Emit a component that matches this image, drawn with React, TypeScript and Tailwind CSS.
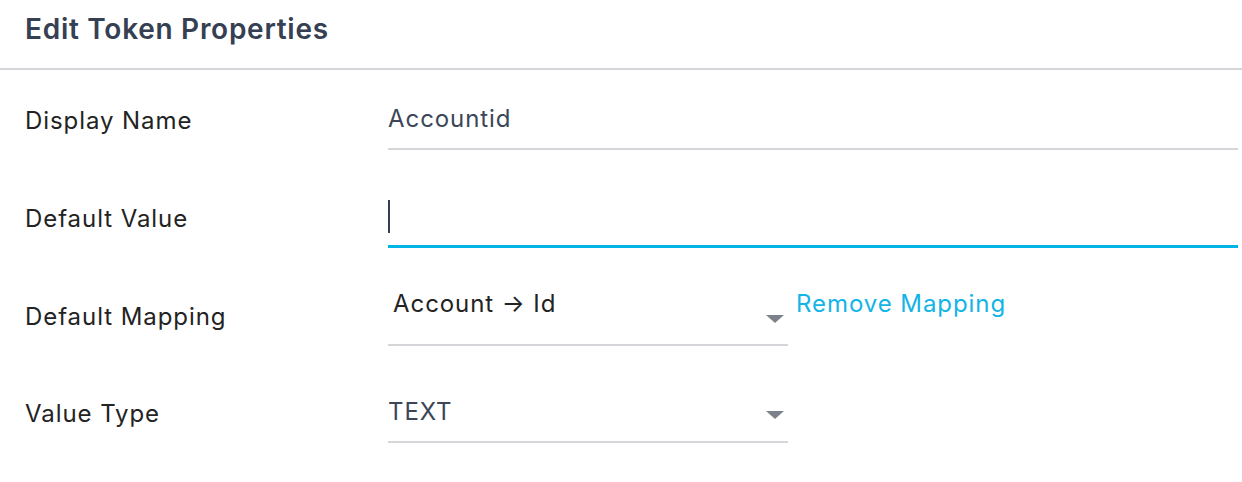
import React from "react";

function Caret() {
  return (
    <svg viewBox="0 0 18 8" aria-hidden className="h-[8px] w-[18px]">
      <path d="M0 0H18L9 8Z" fill="#7d828a" />
    </svg>
  );
}

export default function App() {
  return (
    <div className="h-[482px] w-[1242px] overflow-hidden bg-white font-['Inter',sans-serif] tracking-[0.058em]">
      <div className="flex h-[70px] items-start border-b-2 border-[#d6d6da] px-[25px] pt-[12px]">
        <h1 className="text-[28px] font-semibold leading-[34px] tracking-[0.026em] text-[#354052]">Edit Token Properties</h1>
      </div>

      <div className="pl-[25px] pr-[4px]">
        <div className="mt-[20px] flex items-center">
          <label className="w-[363px] shrink-0 pt-[2px] text-[24px] text-[#232323]">Display Name</label>
          <div className="flex h-[60px] flex-1 items-center border-b-2 border-[#d6d6da] text-[24px] text-[#3b4758]">
            Accountid
          </div>
        </div>

        <div className="mt-[38px] flex items-center">
          <label className="w-[363px] shrink-0 pt-[2px] text-[24px] text-[#232323]">Default Value</label>
          <div className="flex h-[60px] flex-1 items-center border-b-[3px] border-[#00b4e5]">
            <span className="h-[33px] w-[2px] bg-[#354052]" />
          </div>
        </div>

        <div className="mt-[38px] flex items-center">
          <label className="w-[363px] shrink-0 pt-[2px] text-[24px] text-[#232323]">Default Mapping</label>
          <div className="relative h-[60px] w-[400px] shrink-0 border-b-2 border-[#d6d6da]">
            <span className="absolute left-[5px] top-0 text-[24px] text-[#232323]">Account → Id</span>
            <span className="absolute right-[4px] top-[29px] flex">
              <Caret />
            </span>
          </div>
          <a className="ml-[8px] self-start text-[24px] text-[#13b4e6]">Remove Mapping</a>
        </div>

        <div className="mt-[37px] flex items-center">
          <label className="w-[363px] shrink-0 pt-[2px] text-[24px] text-[#232323]">Value Type</label>
          <div className="flex h-[60px] w-[400px] shrink-0 items-center justify-between border-b-2 border-[#d6d6da] pr-[4px]">
            <span className="text-[24px] text-[#3b4758]">TEXT</span>
            <span className="mt-[6px] flex">
              <Caret />
            </span>
          </div>
        </div>
      </div>
    </div>
  );
}
